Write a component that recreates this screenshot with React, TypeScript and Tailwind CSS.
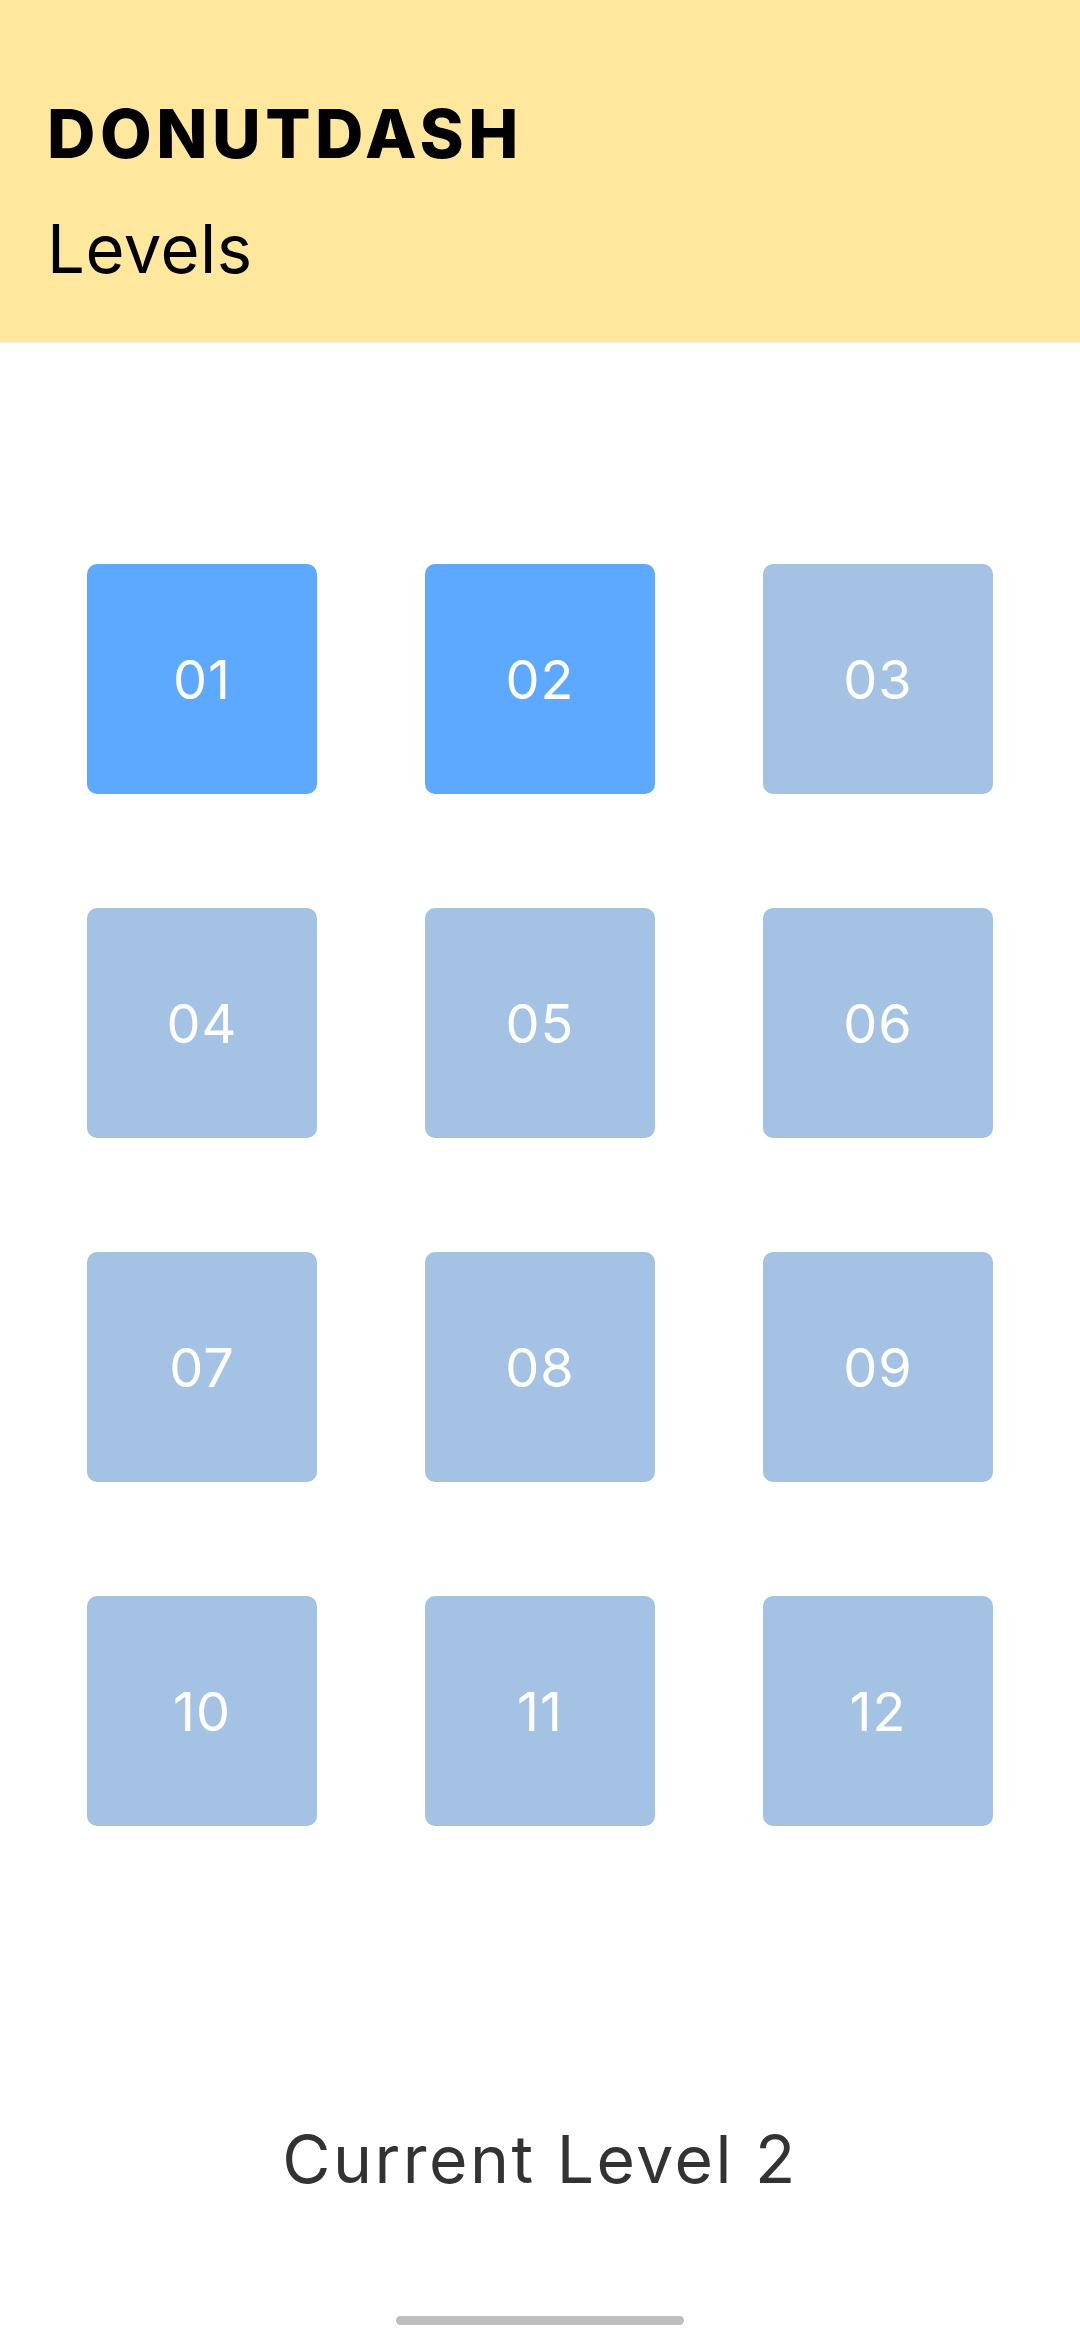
import React from 'react';

const levels = Array.from({ length: 12 }, (_, i) => i + 1);
const currentLevel = 2;

export default function App() {
  return (
    <div className="min-h-screen w-[1080px] bg-white flex flex-col font-['Inter','Liberation_Sans',sans-serif]">
      {/* header */}
      <header className="h-[342px] bg-[#ffe89d] px-[47px] pt-[101px] shadow-[0_1px_2px_rgba(0,0,0,0.08)] shrink-0">
        <h1 className="text-[67px] leading-[66px] font-extrabold text-black tracking-[4.5px]">DONUTDASH</h1>
        <div className="mt-[49px] text-[67px] leading-[66px] font-normal text-black tracking-[0.5px]">Levels</div>
      </header>

      {/* level grid */}
      <div className="mt-[222px] grid grid-cols-[230px_230px_230px] gap-x-[108px] gap-y-[114px] justify-center">
        {levels.map((n) => (
          <button
            key={n}
            className={`w-[230px] h-[230px] rounded-[10px] flex items-center justify-center text-white text-[54px] font-normal tracking-[1px] ${
              n <= currentLevel ? 'bg-[#5da9ff]' : 'bg-[#a4c2e4]'
            }`}
          >
            {String(n).padStart(2, '0')}
          </button>
        ))}
      </div>

      <div className="mt-[300px] text-center text-[66px] leading-[66px] text-[#333333] tracking-[2.5px]">
        Current Level {currentLevel}
      </div>

      <div className="mt-[124px] flex justify-center">
        <div className="w-[288px] h-[9px] rounded-full bg-[#bebebe]" />
      </div>
    </div>
  );
}
